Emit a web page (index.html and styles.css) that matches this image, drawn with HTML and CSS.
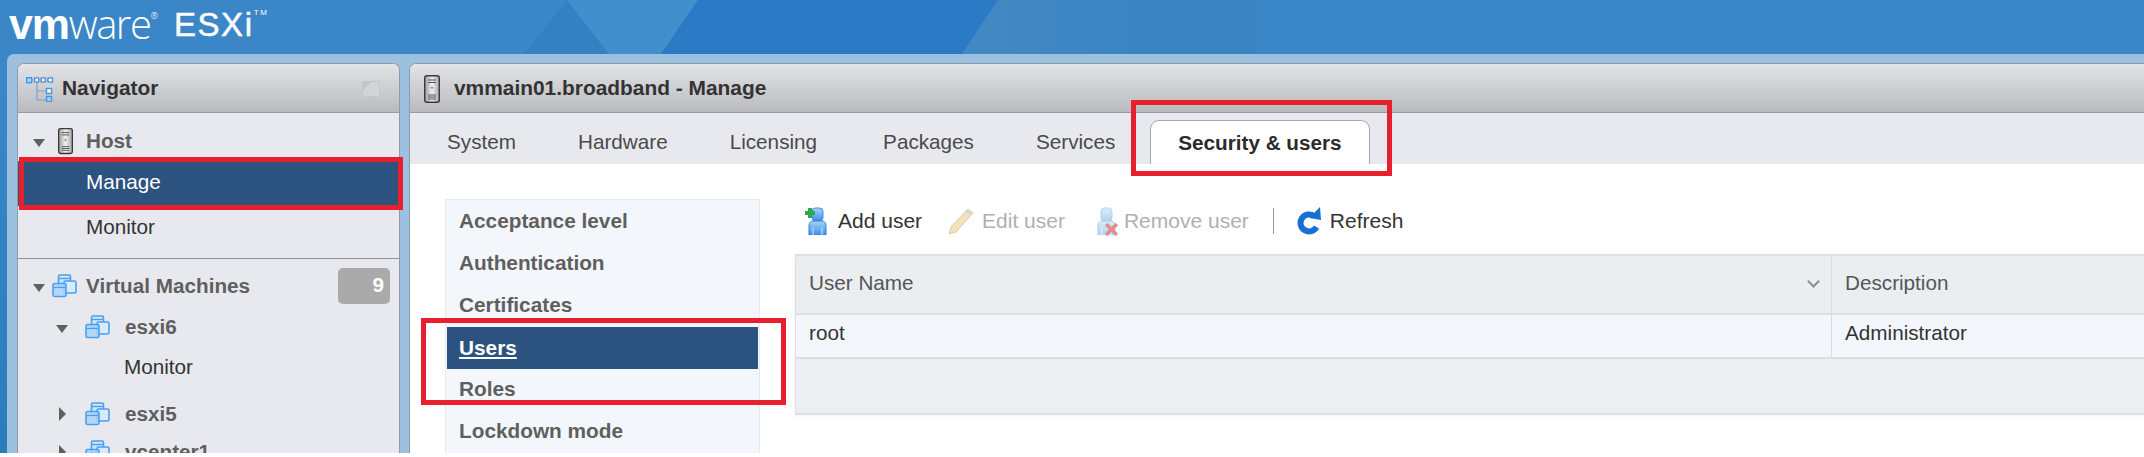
FILE: index.html
```html
<!DOCTYPE html>
<html>
<head>
  <meta charset="UTF-8">
  <link rel="stylesheet" href="styles.css">
</head>
<body>
  <svg class="defs" width="0" height="0">
    <defs>
      <linearGradient id="metal" x1="0" x2="1" y1="0" y2="0">
        <stop offset="0" stop-color="#9a9a9a"/>
        <stop offset="0.5" stop-color="#f0f0f0"/>
        <stop offset="1" stop-color="#a8a8a8"/>
      </linearGradient>
      <linearGradient id="blueBody" x1="0" x2="0" y1="0" y2="1">
        <stop offset="0" stop-color="#a9d3fa"/>
        <stop offset="1" stop-color="#3d8fe6"/>
      </linearGradient>
    </defs>
    <symbol id="i-tree" viewBox="0 0 28 25">
      <path d="M3 3H26M11 3V23H22M11 14H22" fill="none" stroke="#7f9fc0" stroke-width="1.2"/>
      <rect x="0.7" y="0.7" width="5" height="5" fill="#a8d4fb" stroke="#3f97ea" stroke-width="1.4"/>
      <rect x="8.7" y="1" width="4" height="4" fill="#fff" stroke="#4a8fd0" stroke-width="1.3"/>
      <rect x="15.2" y="1" width="4" height="4" fill="#fff" stroke="#4a8fd0" stroke-width="1.3"/>
      <rect x="22" y="1" width="4.5" height="4" fill="#fff" stroke="#4a8fd0" stroke-width="1.3"/>
      <rect x="20.5" y="11.5" width="5" height="5" fill="#fff" stroke="#3f97ea" stroke-width="1.4"/>
      <rect x="20.5" y="19.5" width="5" height="5" fill="#a8d4fb" stroke="#3f97ea" stroke-width="1.4"/>
    </symbol>
    <symbol id="i-host" viewBox="0 0 16 28">
      <rect x="0.7" y="0.7" width="14.6" height="26.6" rx="2" fill="url(#metal)" stroke="#3a3a3a" stroke-width="1.4"/>
      <path d="M4 5H12M4 7.5H12M4 20H12M4 22H12M4 24H12" stroke="#555" stroke-width="1"/>
      <rect x="7.2" y="12" width="1.6" height="1.6" fill="#666"/>
    </symbol>
    <symbol id="i-vm" viewBox="0 0 25 24">
      <rect x="6.5" y="1" width="12" height="12" rx="1.5" fill="#cfe5fb" stroke="#4c9fee" stroke-width="1.6"/>
      <path d="M7 4.5H18" stroke="#4c9fee" stroke-width="1.4"/>
      <rect x="12" y="7" width="12" height="12" rx="1.5" fill="#d8ebfc" stroke="#4c9fee" stroke-width="1.6"/>
      <rect x="1" y="9.5" width="13" height="13" rx="1.5" fill="#a9d3fa" fill-opacity="0.85" stroke="#4c9fee" stroke-width="1.6"/>
      <path d="M1.5 13.5H13.5" stroke="#4c9fee" stroke-width="1.2"/>
    </symbol>
    <symbol id="i-person" viewBox="0 0 24 28">
      <rect x="8" y="1" width="11" height="13" rx="3.5" fill="url(#blueBody)" stroke="#3d8fe6" stroke-width="1"/>
      <path d="M5 28V18.5C5 15.5 7 14 9 14H18C20 14 22 15.5 22 18.5V28Z" fill="url(#blueBody)" stroke="#2f7fd8" stroke-width="1"/>
      <path d="M9 28V21M18 28V21" stroke="#d4e8fb" stroke-width="1"/>
    </symbol>
    <symbol id="i-refresh" viewBox="0 0 26 28">
      <path d="M18 9A8.5 8.5 0 1 0 20.5 20" fill="none" stroke="#1a6fd6" stroke-width="6"/>
      <path d="M13.5 11L25 13L24 0L20.5 3.5L17.5 6.5Z" fill="#1a6fd6"/>
    </symbol>
  </svg>

  <div class="shell">
    <div class="sky sky-a"></div>
    <div class="sky sky-b"></div>
    <div class="sky sky-c"></div>
    <div class="sky sky-d"></div>

    <div class="topbar">
      <span class="logo"><b>vm</b>ware<sup class="reg">®</sup></span>
      <span class="product">ESXi<sup class="tm">TM</sup></span>
    </div>

    <div class="frame">
      <div class="panel nav-panel">
        <div class="panel-head">
          <svg class="icon-tree"><use href="#i-tree"/></svg>
          <span class="panel-title">Navigator</span>
          <span class="pin"></span>
        </div>
        <div class="nav-body">
          <div class="tree-row row-host">
            <span class="twist open"></span>
            <svg class="icon-host"><use href="#i-host"/></svg>
            <span class="tree-label">Host</span>
          </div>
          <div class="tree-leaf selected">Manage</div>
          <div class="tree-leaf">Monitor</div>
          <div class="nav-divider"></div>
          <div class="tree-row row-vms">
            <span class="twist open"></span>
            <svg class="icon-vm"><use href="#i-vm"/></svg>
            <span class="tree-label">Virtual Machines</span>
            <span class="badge">9</span>
          </div>
          <div class="tree-row row-vm row-esxi6">
            <span class="twist open"></span>
            <svg class="icon-vm"><use href="#i-vm"/></svg>
            <span class="tree-label">esxi6</span>
          </div>
          <div class="tree-leaf leaf-deep">Monitor</div>
          <div class="tree-row row-vm row-esxi5">
            <span class="twist closed"></span>
            <svg class="icon-vm"><use href="#i-vm"/></svg>
            <span class="tree-label">esxi5</span>
          </div>
          <div class="tree-row row-vm row-vcenter">
            <span class="twist closed"></span>
            <svg class="icon-vm"><use href="#i-vm"/></svg>
            <span class="tree-label">vcenter1</span>
          </div>
        </div>
      </div>

      <div class="panel main-panel">
        <div class="panel-head">
          <svg class="icon-host-small"><use href="#i-host"/></svg>
          <span class="panel-title">vmmain01.broadband - Manage</span>
        </div>
        <div class="tabs">
          <span class="tab">System</span>
          <span class="tab">Hardware</span>
          <span class="tab">Licensing</span>
          <span class="tab tab-packages">Packages</span>
          <span class="tab">Services</span>
          <span class="tab active">Security &amp; users</span>
        </div>
        <div class="content">
          <div class="side-menu">
            <div class="side-item">Acceptance level</div>
            <div class="side-item">Authentication</div>
            <div class="side-item">Certificates</div>
            <div class="side-item current">Users</div>
            <div class="side-item">Roles</div>
            <div class="side-item">Lockdown mode</div>
          </div>
          <div class="users">
            <div class="toolbar">
              <span class="tool tool-add">
                <svg class="tool-icon">
                  <use href="#i-person"/>
                </svg>
                <svg class="plus" viewBox="0 0 12 12"><path d="M6 1V11M1 6H11" stroke="#2fa84a" stroke-width="4"/></svg>
                Add user
              </span>
              <span class="tool tool-edit off">
                <svg class="tool-icon pencil" viewBox="0 0 26 28">
                  <path d="M20 2L25 6L8 25L1 27L3 20Z" fill="#f0e3bd" stroke="#d9cba0" stroke-width="1"/>
                  <path d="M20 2L25 6L22.5 9L17.5 5Z" fill="#d8d8d8"/>
                </svg>
                Edit user
              </span>
              <span class="tool tool-remove off">
                <svg class="tool-icon faded"><use href="#i-person"/></svg>
                <svg class="cross" viewBox="0 0 12 12"><path d="M1 1L11 11M11 1L1 11" stroke="#e0908c" stroke-width="3.4"/></svg>
                Remove user
              </span>
              <span class="tool-sep"></span>
              <span class="tool tool-refresh">
                <svg class="tool-icon"><use href="#i-refresh"/></svg>
                Refresh
              </span>
            </div>
            <div class="grid">
              <div class="cell head first">User Name<span class="chevron"></span></div>
              <div class="cell head">Description</div>
              <div class="cell body first">root</div>
              <div class="cell body">Administrator</div>
              <div class="grid-foot"></div>
            </div>
          </div>
        </div>
      </div>
    </div>

    <!-- red annotation boxes on top of the screenshot -->
    <div class="mark mark-manage"></div>
    <div class="mark mark-tab"></div>
    <div class="mark mark-users"></div>
  </div>
</body>
</html>
```

FILE: styles.css
```css
* {
  margin: 0;
  padding: 0;
  box-sizing: border-box;
}

html,
body {
  background: #ffffff;
}

body {
  font-family: 'Liberation Sans', Arial, sans-serif;
  font-size: 20.7px;
  color: #333333;
  overflow: hidden;
}

.defs {
  position: absolute;
}

.shell {
  position: relative;
  height: 453px;
  overflow: hidden;
  background: linear-gradient(180deg, #3a86c6 0%, #3a86c6 20%, #2d7cba 100%);
}

/* faint shapes in the blue banner */
.sky {
  position: absolute;
  top: 0;
  left: 0;
  width: 100%;
  height: 63px;
}

.sky-a {
  background: #3580c2;
  clip-path: polygon(567px 0, 698px 0, 655px 63px, 517px 63px);
}

.sky-b {
  background: #428fce;
  clip-path: polygon(567px 0, 698px 0, 655px 63px, 616px 63px);
}

.sky-c {
  background: #2a7ac5;
  clip-path: polygon(698px 0, 998px 0, 956px 63px, 655px 63px);
}

.sky-d {
  background: linear-gradient(90deg, #4389c4 0, #3a84c2 200px);
  left: 956px;
  width: 300px;
  clip-path: polygon(42px 0, 300px 0, 300px 63px, 0 63px);
}

.topbar {
  position: relative;
  height: 54px;
  display: flex;
  align-items: flex-start;
  color: #ffffff;
  padding: 0 0 0 9px;
}

.logo {
  font-family: 'Open Sans', 'Liberation Sans', sans-serif;
  font-weight: 300;
  font-size: 40px;
  line-height: 47px;
  letter-spacing: -1.5px;
  margin-right: 16px;
  white-space: nowrap;
}

.logo b {
  font-family: 'Liberation Sans', sans-serif;
  font-weight: 700;
  font-size: 43px;
  letter-spacing: -1.2px;
}

.reg {
  font-size: 9px;
  vertical-align: 20px;
  line-height: 0;
  letter-spacing: 0;
}

.product {
  font-family: 'Liberation Sans', sans-serif;
  font-size: 33px;
  line-height: 50px;
  letter-spacing: 1.6px;
  -webkit-text-stroke: 0.5px #ffffff;
  white-space: nowrap;
}

.tm {
  font-size: 8px;
  vertical-align: 21px;
  line-height: 0;
  -webkit-text-stroke: 0;
}

.frame {
  position: relative;
  height: 399px;
  margin-left: 7px;
  padding: 9px 0 0 10px;
  display: flex;
  gap: 9px;
  background: #9cc0e0;
  border-radius: 7px 0 0 0;
}

.panel {
  border: 1px solid #8f9aa6;
  border-bottom: none;
  border-radius: 7px 7px 0 0;
  overflow: hidden;
}

.nav-panel {
  width: 383px;
  flex-shrink: 0;
  background: #e8e9ee;
}

.main-panel {
  flex: 1;
  background: #ffffff;
  border-right: none;
  border-radius: 7px 0 0 0;
}

.panel-head {
  height: 49px;
  display: flex;
  align-items: center;
  background: linear-gradient(180deg, #e3e4e7 0%, #b9babd 100%);
  border-bottom: 1px solid #999da2;
}

.panel-title {
  font-weight: bold;
  font-size: 20.9px;
  color: #333333;
}

.icon-tree {
  width: 28px;
  height: 25px;
  margin: 2px 8px 0 8px;
}

.icon-host-small {
  width: 16px;
  height: 28px;
  margin: 2px 14px 0 14px;
}

.pin {
  width: 18px;
  height: 16px;
  margin: 2px 19px 0 auto;
  border: 1px solid #c6c7ca;
  background: linear-gradient(135deg, #c4c5c8 0, #c4c5c8 28%, #d3d4d7 28%);
}

.nav-body {
  padding-top: 8px;
}

.tree-row {
  height: 40px;
  display: flex;
  align-items: center;
  padding-left: 15px;
  color: #5f5f5f;
  font-weight: bold;
}

.twist {
  width: 12px;
  flex-shrink: 0;
  height: 0;
  border-style: solid;
}

.twist.open {
  border-width: 8px 6px 0 6px;
  border-color: #606060 transparent transparent transparent;
  margin-top: 3px;
}

.twist.closed {
  width: 7px;
  border-width: 7px 0 7px 7px;
  border-color: transparent transparent transparent #606060;
  margin: 0 2px 0 3px;
}

.row-host .twist {
  margin-right: 13px;
}

.icon-host {
  width: 15px;
  height: 28px;
  margin-right: 13px;
}

.icon-vm {
  width: 25px;
  height: 24px;
}

.row-vms {
  margin-top: 7px;
  padding-right: 9px;
}

.row-vms .twist {
  margin-right: 7px;
}

.row-vms .icon-vm {
  margin-right: 9px;
}

.row-vm {
  padding-left: 38px;
}

.row-vm .twist.open {
  margin-right: 17px;
}

.row-vm .twist.closed {
  margin-right: 19px;
}

.row-vm .icon-vm {
  margin-right: 15px;
}

.row-esxi6 {
  margin-top: 1px;
}

.row-esxi5 {
  margin-top: 7px;
}

.row-vcenter {
  margin-top: -2px;
}

.badge {
  margin-left: auto;
  width: 52px;
  height: 36px;
  margin-top: -1px;
  background: #aaaaaa;
  color: #ffffff;
  border-radius: 5px;
  text-align: right;
  padding-right: 6px;
  line-height: 34px;
}

.tree-leaf {
  height: 45px;
  line-height: 41px;
  padding-left: 68px;
  color: #333333;
}

.tree-leaf.selected {
  background: #2c5380;
  color: #ffffff;
}

.leaf-deep {
  height: 40px;
  line-height: 39px;
  padding-left: 106px;
}

.nav-divider {
  height: 1px;
  margin-top: 7px;
  background: #8f9397;
}

.tabs {
  height: 51px;
  display: flex;
  align-items: flex-end;
  padding-left: 6px;
  background: #e8e9ee;
}

.tab {
  height: 44px;
  line-height: 43px;
  padding: 0 31px;
  color: #4a4a4a;
}

.tab-packages {
  margin-left: 4px;
}

.tab.active {
  margin-left: 4px;
  padding: 0 27px;
  background: #ffffff;
  border: 1px solid #a8a8a8;
  border-bottom: none;
  border-radius: 9px 9px 0 0;
  font-weight: bold;
  color: #2b2b2b;
}

.content {
  display: flex;
  gap: 35px;
  padding: 35px 0 0 35px;
}

.side-menu {
  width: 315px;
  flex-shrink: 0;
  height: 260px;
  padding: 0 1px;
  background: #f3f6fb;
  border: 1px solid #e6e9ee;
}

.side-item {
  height: 42px;
  line-height: 42px;
  padding-left: 12px;
  font-weight: bold;
  font-size: 20.8px;
  color: #5f5f5f;
}

.side-item.current {
  margin-top: 1px;
  margin-bottom: -1px;
  background: #2c5380;
  color: #ffffff;
  text-decoration: underline;
}

.users {
  flex: 1;
  min-width: 0;
}

.toolbar {
  position: relative;
  height: 55px;
  display: flex;
  align-items: center;
  padding: 0 0 12px 9px;
  font-size: 21px;
  color: #333333;
}

.tool {
  position: relative;
  display: flex;
  align-items: center;
  white-space: nowrap;
}

.tool.off {
  color: #b0b0b0;
}

.tool-icon {
  width: 24px;
  height: 28px;
  margin-right: 10px;
  flex-shrink: 0;
}

.tool-edit {
  margin-left: 26px;
}

.pencil {
  width: 26px;
  margin-right: 8px;
}

.tool-remove {
  margin-left: 28px;
}

.faded {
  opacity: 0.4;
  margin-right: 7px;
}

.tool-refresh .tool-icon {
  width: 26px;
  margin-right: 8px;
}

.plus {
  position: absolute;
  left: 0;
  top: 0;
  width: 12px;
  height: 12px;
}

.cross {
  position: absolute;
  left: 12px;
  top: 16px;
  width: 13px;
  height: 13px;
}

.tool-sep {
  width: 1px;
  height: 26px;
  margin: 0 22px 0 24px;
  background: #9a9a9a;
}

.grid {
  display: grid;
  grid-template-columns: 1036px 1fr;
  border-top: 2px solid #dcdfe2;
  border-left: 1px solid #dcdfe2;
  border-bottom: 2px solid #dcdfe2;
  box-shadow: 0 2px 4px rgba(0, 0, 0, 0.04);
}

.cell {
  position: relative;
  display: flex;
  align-items: center;
  padding-left: 13px;
}

.cell.first {
  border-right: 1px solid #d8dbdf;
}

.cell.head {
  height: 57px;
  padding-bottom: 4px;
  background: #ebeef0;
  color: #555555;
}

.cell.body {
  height: 44px;
  padding-bottom: 7px;
  background: #f3f6fb;
  border-top: 2px solid #dcdfe2;
}

.chevron {
  position: absolute;
  right: 13px;
  top: 21px;
  width: 9px;
  height: 9px;
  border-right: 2px solid #8c8c8c;
  border-bottom: 2px solid #8c8c8c;
  transform: rotate(45deg);
}

.grid-foot {
  grid-column: 1 / -1;
  height: 56px;
  background: #eceef1;
  border-top: 2px solid #dcdfe2;
}

.mark {
  position: absolute;
  border: 5px solid #e8202e;
}

.mark-manage {
  left: 19px;
  top: 157px;
  width: 384px;
  height: 53px;
}

.mark-tab {
  left: 1131px;
  top: 100px;
  width: 261px;
  height: 76px;
}

.mark-users {
  left: 421px;
  top: 318px;
  width: 365px;
  height: 87px;
}
```
